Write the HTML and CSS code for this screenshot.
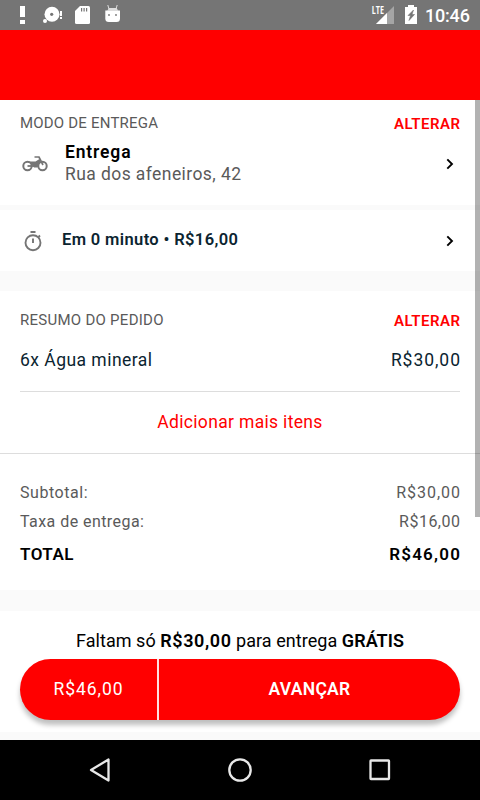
FILE: index.html
```html
<!DOCTYPE html>
<html lang="pt-BR">
<head>
<meta charset="utf-8">
<title>Resumo do pedido</title>
<link rel="stylesheet" href="styles.css">
</head>
<body>
<header class="status">
  <svg class="status-icons" width="130" height="30" viewBox="0 0 130 30" fill="#fff">
    <path d="M20 6h5v11h-5zM20 20h5v4h-5z"/>
    <circle cx="52" cy="14.300" r="7.500"/><circle cx="45" cy="21" r="2"/><path d="M60 11h2v5h-2zM60 17h2v2h-2z"/><circle cx="51.700" cy="14.300" r="1.600" fill="#757575"/>
    <path d="M80 6h8.500q1.500 0 1.500 1.500v15q0 1.500-1.500 1.500h-12q-1.500 0-1.500-1.500V11z"/><path d="M81 8h1.200v3.500H81zM83.500 8h1.200v3.500h-1.200zM86 8h1.200v3.500H86z" fill="#757575"/>
    <path d="M105.300 10.500h14.700v8q0 3.500-3.500 3.500h-7.700q-3.500 0-3.500-3.500z"/><path d="M107 11l2-3h7.500l2 3z" fill="#ddd"/><path d="M109 9l-1.200-4M116 9l1.200-4" stroke="#ddd" stroke-width="1"/><circle cx="109" cy="15" r=".9" fill="#757575"/><circle cx="116" cy="15" r=".9" fill="#757575"/>
  </svg>
  <div class="status-right">
    <span class="lte">LTE</span>
    <svg width="48" height="30" viewBox="0 0 48 30" fill="#fff"><path d="M4 24L22 6v18z" opacity=".35"/><path d="M4 24L15 13v11z"/><path d="M36 5h6v2h3v17H33V7h3z"/><path d="M41.500 10l-5.500 5.500h2.500l-1.500 5 5.500-6H40z" fill="#757575" stroke="#757575" stroke-width=".6"/></svg>
    <span class="clock">10:46</span>
  </div>
</header>
<div class="appbar"></div>
<main class="content">
  <section class="mode">
    <div class="row heading"><span class="label t-mode">MODO DE ENTREGA</span><a class="change">ALTERAR</a></div>
    <div class="row method">
      <svg class="moto" width="27" height="18" viewBox="0 0 27 18" fill="none" stroke="#757575" stroke-width="2"><circle cx="5.500" cy="11" r="4.200"/><circle cx="20.500" cy="11" r="4.200"/><path d="M12.500 2h4.500l4 8" stroke-width="1.700"/><path d="M4.500 6.500h9l4-2.500 1 2-3 6.500h-3.500l-2.500-3.500z" fill="#757575" stroke="none"/><path d="M5.500 11h8" stroke-width="1.800"/></svg>
      <div class="address"><strong class="t-entrega">Entrega</strong><span class="t-rua">Rua dos afeneiros, 42</span></div>
      <svg class="chevron" width="8" height="12" viewBox="0 0 8 12"><path d="M1.300 1.300L6 6 1.300 10.700"/></svg>
    </div>
  </section>
  <section class="time row">
    <svg width="20" height="22" viewBox="0 0 20 22" fill="none" stroke="#757575" stroke-width="1.900"><circle cx="10" cy="12.700" r="7.500"/><path d="M7.500 2h5M10 8.500v4.500M15.500 7l1.500-1.500"/></svg>
    <span class="t-time">Em 0 minuto • R$16,00</span>
    <svg class="chevron" width="8" height="12" viewBox="0 0 8 12"><path d="M1.300 1.300L6 6 1.300 10.700"/></svg>
  </section>
  <section class="order">
    <div class="row heading"><span class="label t-resumo">RESUMO DO PEDIDO</span><a class="change">ALTERAR</a></div>
    <div class="row item"><span class="t-item">6x Água mineral</span><span class="t-price">R$30,00</span></div>
    <a class="add"><span>Adicionar mais itens</span></a>
    <div class="totals">
      <div class="row"><span class="t-sub">Subtotal:</span><span class="t-value">R$30,00</span></div>
      <div class="row"><span class="t-tax">Taxa de entrega:</span><span class="t-value tax-value">R$16,00</span></div>
      <div class="row total"><span class="t-total">TOTAL</span><span class="t-sum">R$46,00</span></div>
    </div>
  </section>
  <i class="scrollbar"></i>
</main>
<footer class="checkout">
  <p><span>Faltam só <b class="missing">R$30,00</b> para entrega <b>GRÁTIS</b></span></p>
  <div class="button"><span class="amount">R$46,00</span><span class="next">AVANÇAR</span></div>
</footer>
<nav class="navbar">
  <svg width="24" height="26" viewBox="0 0 24 26"><path d="M20.500 2.500v21L3 13z"/></svg>
  <svg width="26" height="26" viewBox="0 0 26 26"><circle cx="13" cy="13" r="10.700"/></svg>
  <svg width="24" height="24" viewBox="0 0 24 24"><rect x="2.500" y="2.500" width="18.500" height="18.500" rx=".5"/></svg>
</nav>
</body>
</html>
```

FILE: styles.css
```css
* { box-sizing: border-box; }
body {
  margin: 0;
  width: 480px;
  height: 800px;
  display: flex;
  flex-direction: column;
  overflow: hidden;
  background: #fafafa;
  color: #000;
  font-family: Roboto, "Liberation Sans", sans-serif;
  white-space: nowrap;
}
svg { display: block; flex: none; }
.row { display: flex; justify-content: space-between; }
.status { height: 30px; background: #757575; color: #fff; display: flex; justify-content: space-between; }
.status-right { display: flex; padding-right: 11px; }
.lte { font: 700 10px/21px "Open Sans", sans-serif; transform: scaleX(.72); transform-origin: right; margin-right: -12px; }
.clock { font-size: 18px; font-weight: 500; line-height: 32px; width: 44px; margin-left: 5px; letter-spacing: -.2px; }
.appbar { height: 70px; background: #f00; }
.content { position: relative; height: 511px; }
.content section { background: #fff; padding: 0 20px; }
.scrollbar { position: absolute; right: 0; top: 0; width: 5px; height: 417px; background: rgba(0, 0, 0, .3); }
.heading { height: 20px; line-height: 20px; font-size: 15px; }
.label { color: #5a5a5a; }
.t-mode { letter-spacing: .2px; }
.t-resumo { letter-spacing: .27px; }
.change { color: #f00; font-weight: 600; letter-spacing: .5px; margin-right: -.5px; padding-top: 1px; }
.content .mode { height: 105px; padding-top: 13px; margin-bottom: 5px; }
.method { margin-top: 9px; }
.moto { margin: 13px 0 0 2px; }
.address { flex: 1; display: flex; flex-direction: column; align-items: flex-start; margin-left: 16px; font-size: 17.500px; line-height: 22px; }
.address strong { font-weight: 600; font-size: 17.500px; letter-spacing: .85px; line-height: 21px; }
.address span { color: #5a5a5a; letter-spacing: .42px; }
.chevron { fill: none; stroke: #000; stroke-width: 1.900; margin-right: 6px; }
.method .chevron { margin-top: 16px; }
.content .time { height: 61px; align-items: center; margin-bottom: 20px; color: #0b2430; font-size: 16.500px; font-weight: 600; }
.time > svg:first-child { margin-left: 3px; }
.t-time { flex: 1; margin-left: 19px; padding-bottom: 2px; letter-spacing: .37px; }
.order { height: 299px; }
.content .order { padding-top: 19px; }
.item { height: 62px; line-height: 60px; border-bottom: 1px solid #ddd; color: #0b2430; font-size: 17.500px; }
.t-item { letter-spacing: .47px; }
.t-price { letter-spacing: .95px; margin-right: -.95px; }
.add { display: block; height: 62px; margin: 0 -20px; border-bottom: 1px solid #ddd; text-align: center; line-height: 61px; font-size: 17.500px; letter-spacing: .33px; color: #f00; }
.totals { padding-top: 24px; font-size: 16px; line-height: 29px; color: #5a5a5a; }
.t-sub { letter-spacing: .55px; }
.t-tax { letter-spacing: .44px; }
.t-value { letter-spacing: .95px; margin-right: -.95px; }
.tax-value { letter-spacing: .5px; margin-right: -.5px; }
.total { font-size: 17px; font-weight: 600; color: #000; line-height: 37px; }
.t-total { letter-spacing: .45px; }
.t-sum { letter-spacing: 1.250px; margin-right: -1.250px; }
.checkout { height: 121px; background: #fff; padding: 19px 20px 0; }
.checkout p { margin: 0; text-align: center; font-size: 18px; line-height: 22px; height: 29px; letter-spacing: .05px; }
.checkout b { font-weight: 600; }
.checkout .missing { letter-spacing: .6px; }
.button { display: flex; height: 61px; line-height: 60px; border-radius: 31px; background: #f00; color: #fff; text-align: center; box-shadow: 0 5px 5px rgba(0, 0, 0, .25); font-size: 17.500px; }
.amount { width: 139px; border-right: 2px solid #ffe0e0; letter-spacing: .95px; }
.next { flex: 1; font-weight: 600; letter-spacing: .25px; }
.navbar { margin-top: auto; height: 60px; padding: 0 88px; background: #000; display: flex; justify-content: space-between; align-items: center; }
.navbar svg { fill: none; stroke: #e8e8e8; stroke-width: 2.300; stroke-linejoin: round; }
```
